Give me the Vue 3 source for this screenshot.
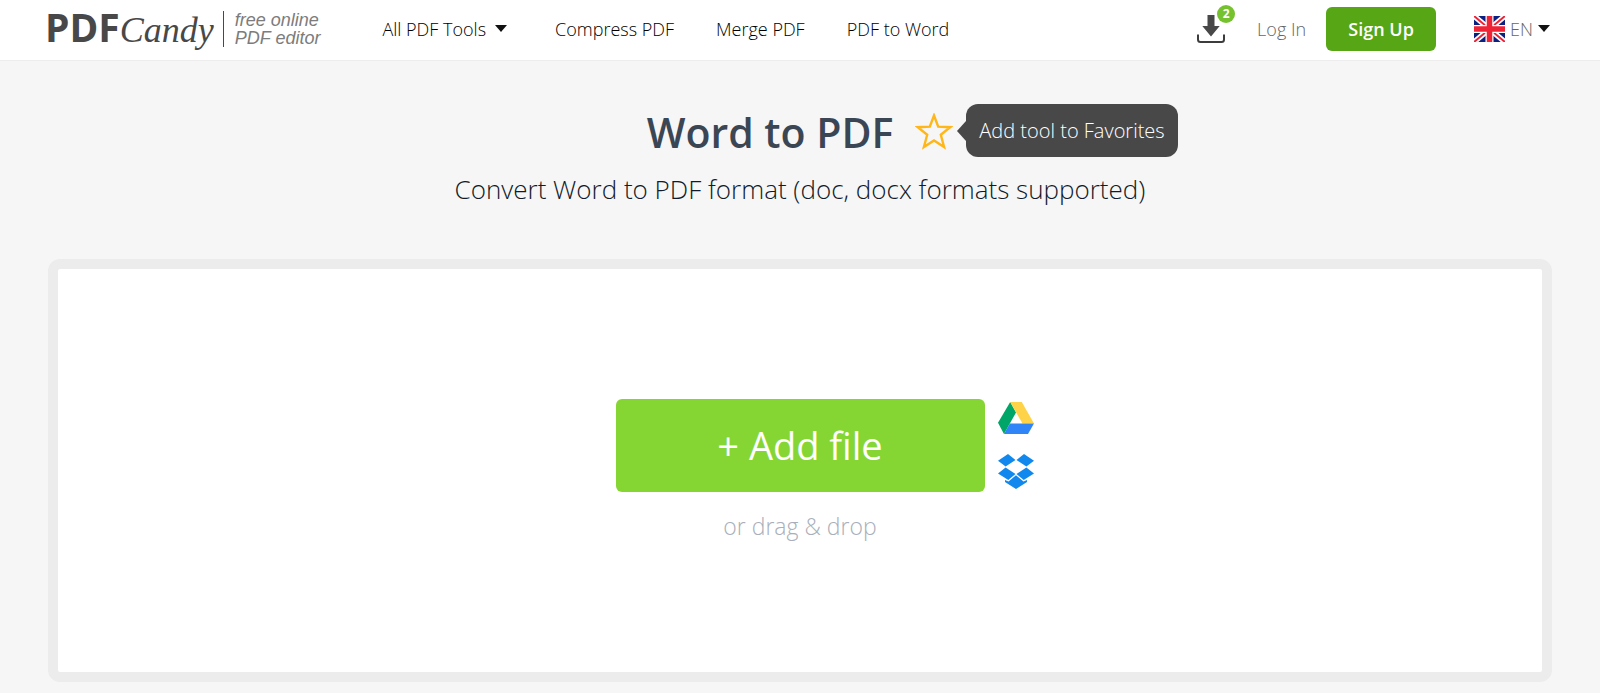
<template>
  <div class="page">
    <header class="header">
      <a class="logo" href="#">
        <span class="logo-name"><span class="logo-pdf">PDF</span><span class="logo-candy">Candy</span></span>
        <span class="logo-tagline">free online<br />PDF editor</span>
      </a>

      <nav class="nav">
        <button class="nav-item" type="button">All PDF Tools <span class="caret"></span></button>
        <a v-for="link in links" :key="link" class="nav-item" href="#">{{ link }}</a>
      </nav>

      <div class="account">
        <button class="downloads" type="button" aria-label="Downloads">
          <svg width="28" height="28" viewBox="0 0 28 28">
            <path d="M10.500 0h7v11h5.200L14 21.500 5.300 11h5.200z" fill="#484848" />
            <path d="M1 19.500v5Q1 27 3.500 27h21q2.500 0 2.500-2.500v-5" fill="none" stroke="#3c3c3c" stroke-width="2" />
          </svg>
          <span class="badge">{{ downloads }}</span>
        </button>
        <a class="login" href="#">Log In</a>
        <button class="signup" type="button">Sign Up</button>
        <button class="language" type="button">
          <svg width="31" height="26" viewBox="0 0 31 26">
            <path d="M0 0h31v26H0z" fill="#0b2080" />
            <path d="M0 0l31 26M31 0L0 26" stroke="#fff" stroke-width="5.500" />
            <path d="M0 0l31 26M31 0L0 26" stroke="#ee2436" stroke-width="2" />
            <path d="M15.500 0v26M0 13h31" stroke="#fff" stroke-width="8" />
            <path d="M15.500 0v26M0 13h31" stroke="#ee2436" stroke-width="5.500" />
          </svg>
          <span>EN</span>
          <span class="caret"></span>
        </button>
      </div>
    </header>

    <main class="main">
      <div class="title-row">
        <h1 class="title">Word to PDF</h1>
        <button class="favorite" type="button" aria-label="Add tool to Favorites">
          <svg width="38" height="38" viewBox="0 0 38 38">
            <path
              d="M19 2.500l4.200 11.200 12 .5-9.400 7.500 3.300 12.300L19 27.500 8.900 34l3.300-12.300-9.400-7.500 12-.5z"
              fill="none"
              stroke="#ffb619"
              stroke-width="2.400"
            />
          </svg>
          <span class="tooltip">Add tool to Favorites</span>
        </button>
      </div>
      <p class="subtitle">Convert Word to PDF format (doc, docx formats supported)</p>

      <section class="dropzone">
        <div class="upload">
          <button class="add-file" type="button">+ Add file</button>
          <div class="sources">
            <button class="source" type="button" aria-label="Google Drive">
              <svg width="36" height="32" viewBox="0 0 36 32">
                <path d="M12.200 0L0 20.800 6 32 18 10.500z" fill="#00a667" />
                <path d="M12.200 0h11.600L36 21.500H24.500z" fill="#ffd348" />
                <path d="M11.800 21.500H36L30 32H6z" fill="#2f84f7" />
              </svg>
            </button>
            <button class="source" type="button" aria-label="Dropbox">
              <svg width="36" height="36" viewBox="0 0 36 36" fill="#1188ee">
                <path d="M10 0l7.500 6L7.600 12.600 0 6.800z" />
                <path d="M26 0l10 6.800-7.600 5.800L18.500 6z" />
                <path d="M7.600 13.400L17.500 20 10.300 26 0 19.500z" />
                <path d="M28.400 13.400L36 19.500 25.700 26l-7.200-6z" />
                <path d="M18 21.300l7.500 6.200 3.500-1.500v2L18 35 7 28v-2l3.500 1.500z" />
              </svg>
            </button>
          </div>
        </div>
        <p class="hint">or drag &amp; drop</p>
      </section>
    </main>
  </div>
</template>

<script setup>
import { ref } from 'vue';

const links = ['Compress PDF', 'Merge PDF', 'PDF to Word'];
const downloads = ref(2);
</script>

<style>
body {
  background: #f6f6f6;
}
</style>

<style scoped>
.page {
  font-family: "Open Sans", "Noto Sans", sans-serif;
  color: #111;
}

button {
  padding: 0;
  border: none;
  background: none;
  font: inherit;
  color: inherit;
  cursor: pointer;
}

a {
  color: inherit;
  text-decoration: none;
}

svg {
  display: block;
}

/* Header */
.header {
  display: flex;
  align-items: center;
  box-sizing: border-box;
  height: 61px;
  padding: 0 50px 3px 45px;
  background: #fff;
  border-bottom: 1px solid #ededed;
}

.logo {
  display: flex;
  align-items: center;
  gap: 9px;
  color: #484848;
}

.logo-name {
  display: flex;
  align-items: baseline;
  line-height: 40px;
}

.logo-pdf {
  font-size: 39px;
  font-weight: 700;
}

.logo-candy {
  font-family: "Liberation Serif", serif;
  font-size: 36px;
  font-style: italic;
}

.logo-tagline {
  padding-left: 11px;
  border-left: 1px solid #484848;
  font-family: "Liberation Sans", sans-serif;
  font-size: 18px;
  font-style: italic;
  line-height: 18px;
  color: #7c7c7c;
}

.nav {
  display: flex;
  gap: 42px;
  margin-left: 62px;
  font-size: 18px;
  font-weight: 300;
  color: #000;
}

.nav-item {
  display: flex;
  align-items: center;
  gap: 9px;
  white-space: nowrap;
}

button.nav-item {
  margin-right: 6px;
}

.caret {
  border: 6px solid transparent;
  border-top: 7px solid #111;
  border-bottom: none;
}

.account {
  display: flex;
  align-items: center;
  margin-left: auto;
  font-size: 18px;
  font-weight: 300;
  color: #666;
}

.downloads {
  position: relative;
}

.badge {
  position: absolute;
  top: -10px;
  right: -10px;
  width: 18px;
  height: 18px;
  border-radius: 50%;
  background: #76c22e;
  color: #fff;
  font-size: 12px;
  font-weight: 700;
  line-height: 18px;
  text-align: center;
}

.login {
  margin: 0 20px 0 32px;
}

.signup {
  width: 110px;
  height: 44px;
  border-radius: 6px;
  background: #56a616;
  color: #fff;
  font-weight: 600;
}

.language {
  display: flex;
  align-items: center;
  gap: 5px;
  margin-left: 38px;
}

/* Page heading */
.main {
  padding: 43px 48px 11px;
}

.title-row {
  display: flex;
  justify-content: center;
  align-items: center;
  gap: 22px;
}

.title {
  margin: 0;
  font-size: 41px;
  font-weight: 600;
  line-height: 56px;
  color: #3b4654;
}

.favorite {
  position: relative;
}

.tooltip {
  position: absolute;
  top: -9px;
  left: 51px;
  padding: 0 13px;
  border-radius: 12px;
  background: #484848;
  color: #fff;
  font-size: 20px;
  font-weight: 300;
  line-height: 53px;
  white-space: nowrap;
}

.tooltip::before {
  content: "";
  position: absolute;
  top: 17px;
  left: -9px;
  border: 10px solid transparent;
  border-right: 9px solid #484848;
  border-left: none;
}

.subtitle {
  margin: 10px 0 51px;
  font-size: 26px;
  font-weight: 300;
  line-height: 38px;
  text-align: center;
  color: #101a2a;
}

/* File drop area */
.dropzone {
  padding: 130px 0 128px;
  border: 10px solid #ececec;
  border-radius: 12px;
  background: #fff;
}

.upload {
  display: grid;
  grid-template-columns: 1fr 369px 1fr;
  align-items: center;
  column-gap: 13px;
}

.add-file {
  grid-column: 2;
  height: 93px;
  padding-bottom: 2px;
  border-radius: 6px;
  background: #86d633;
  color: #fff;
  font-size: 38px;
}

.sources {
  display: flex;
  flex-direction: column;
  align-items: flex-start;
  gap: 20px;
}

.hint {
  margin: 16px 0 0;
  font-size: 23px;
  font-weight: 300;
  line-height: 36px;
  text-align: center;
  color: #a9afba;
}
</style>
